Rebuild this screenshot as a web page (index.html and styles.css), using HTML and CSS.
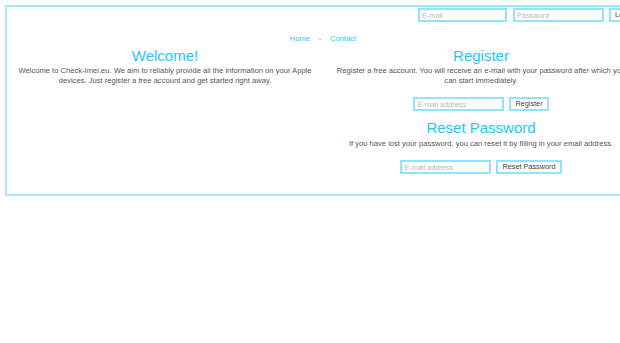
FILE: index.html
```html
<!DOCTYPE html>
<html>
<head>
<meta charset="utf-8">
<link rel="stylesheet" href="styles.css">
</head>
<body>
<div class="page">
  <div class="login">
    <input class="field field-mail" type="text" placeholder="E-mail">
    <input class="field field-pass" type="password" placeholder="Password">
    <button class="btn btn-login">Login</button>
  </div>
  <nav class="nav">
    <a href="#">Home</a>
    <span class="sep">-</span>
    <a href="#">Contact</a>
  </nav>
  <div class="cols">
    <div class="col">
      <h1 class="title">Welcome!</h1>
      <p class="text">Welcome to Check-Imei.eu. We aim to reliably provide all the information on your Apple devices. Just register a free account and get started right away.</p>
    </div>
    <div class="col">
      <h1 class="title">Register</h1>
      <p class="text">Register a free account. You will receive an e-mail with your password after which you can start immediately.</p>
      <form class="row">
        <input class="field field-wide" type="text" placeholder="E-mail address">
        <button class="btn" type="button">Register</button>
      </form>
      <h1 class="title title-reset">Reset Password</h1>
      <p class="text text-reset">If you have lost your password, you can reset it by filling in your email address.</p>
      <form class="row">
        <input class="field field-wide" type="text" placeholder="E-mail address">
        <button class="btn" type="button">Reset Password</button>
      </form>
    </div>
  </div>
</div>
</body>
</html>
```
FILE: styles.css
```css
html, body {
  margin: 0;
  padding: 0;
  background: #fff;
  overflow: hidden;
}
body {
  font-family: "Liberation Sans", Arial, sans-serif;
  font-size: 7.6px;
  color: #555;
}
.page {
  margin: 5px 0 0 5px;
  width: 636px;
  box-sizing: border-box;
  border: 2px solid #a4eafa;
  padding: 1px 0 20px;
}
.login {
  display: flex;
  justify-content: flex-end;
  padding-right: 2px;
}
.field {
  box-sizing: border-box;
  height: 14px;
  border: 2px solid #93e4f8;
  padding: 0 2px;
  font-family: "Liberation Sans", Arial, sans-serif;
  font-size: 7.3px;
  color: #555;
  background: #fff;
  outline: none;
}
.field::placeholder {
  color: #b8b8b8;
}
.field-mail {
  width: 89px;
  margin-right: 6px;
}
.field-pass {
  width: 91px;
  margin-right: 5px;
}
.field-wide {
  width: 91px;
}
.btn {
  box-sizing: border-box;
  height: 14px;
  border: 2px solid #93e4f8;
  background: #fff;
  padding: 0 4px;
  font-family: "Liberation Sans", Arial, sans-serif;
  font-size: 7.3px;
  color: #444;
  line-height: 10px;
}
.btn-login {
  width: 28px;
  text-align: left;
}
.nav {
  display: flex;
  justify-content: center;
  gap: 9px;
  margin-top: 12px;
  line-height: 10px;
  font-size: 7.5px;
}
.nav a {
  color: #29c9f8;
  text-decoration: none;
}
.sep {
  color: #888;
}
.cols {
  display: grid;
  grid-template-columns: 1fr 1fr;
}
.col {
  display: flex;
  flex-direction: column;
  align-items: center;
  padding: 0 9px;
  text-align: center;
}
.title {
  margin: 3px 0 0;
  font-size: 15px;
  line-height: 18px;
  font-weight: normal;
  color: #24c8f7;
}
.title-reset {
  margin-top: 8px;
}
.text {
  margin: 1px 0 0;
  line-height: 10px;
}
.text-reset {
  margin-top: 2px;
}
.row {
  display: flex;
  gap: 5px;
  margin: 11px 0 0;
}
```
